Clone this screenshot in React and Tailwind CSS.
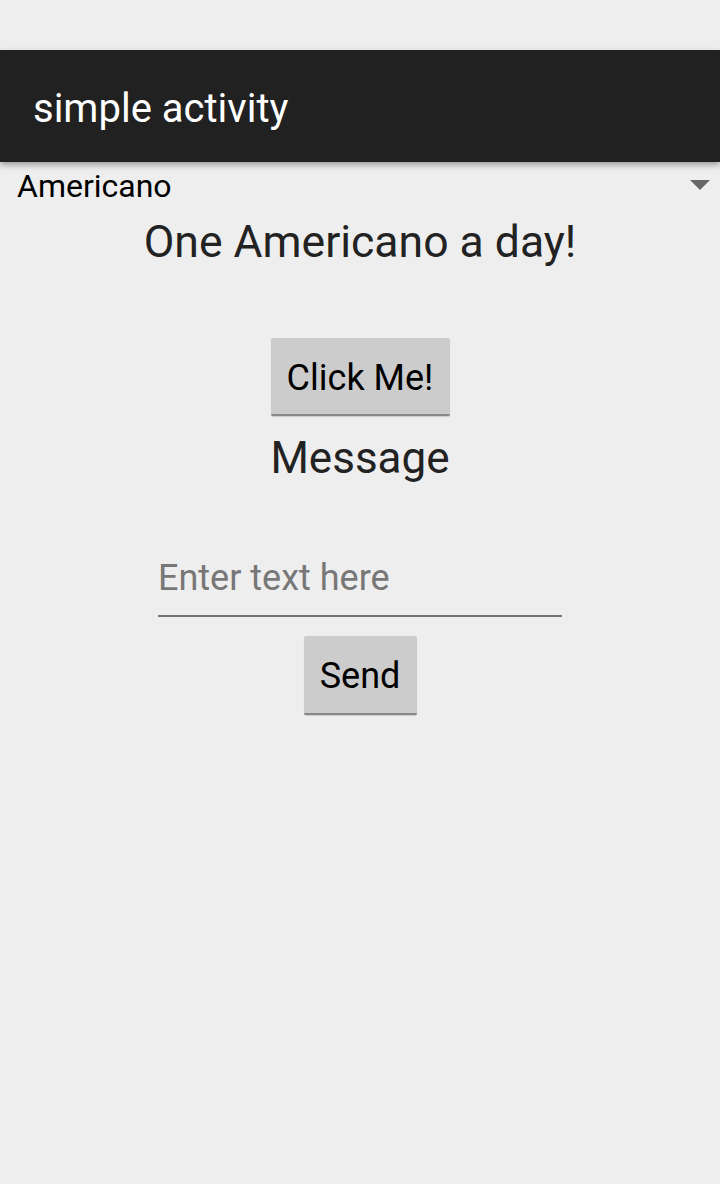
export default function App() {
  return (
    <div className="w-[720px] h-[1184px] bg-[#eeeeee] flex flex-col" style={{ fontFamily: "Roboto, sans-serif" }}>
      <div className="h-[50px] shrink-0" />
      <div className="h-[112px] shrink-0 bg-[#212121] flex items-center pl-[33px] pt-[5px] shadow-[0_3px_6px_rgba(0,0,0,0.35)] relative z-10">
        <span className="text-white text-[40px] leading-none">simple activity</span>
      </div>
      <div className="h-[48px] flex items-center justify-between pl-[17px] pr-[10px]">
        <span className="text-black text-[32px] leading-none">Americano</span>
        <svg width="20" height="12" viewBox="0 0 20 12"><polygon points="0,0 20,0 10,10" fill="#666666" /></svg>
      </div>
      <div className="flex flex-col items-center">
        <div className="text-[#222222] text-[44.5px] leading-[44px] mt-[10px]">One Americano a day!</div>
        <button className="mt-[74px] w-[179px] h-[78px] pt-[4px] bg-[#cccccc] border-b-2 border-[#888888] rounded-[2px] text-black text-[36px] leading-none shadow-[0_1px_1px_rgba(0,0,0,0.15)]">Click Me!</button>
        <div className="mt-[20px] text-[#222222] text-[44px] leading-[44px]">Message</div>
        <div className="mt-[80px] w-[404px] border-b-2 border-[#737373] pb-[19px]">
          <div className="text-[#777777] text-[36px] leading-[36px]">Enter text here</div>
        </div>
        <button className="mt-[19px] w-[113px] h-[79px] pt-[3px] bg-[#cccccc] border-b-2 border-[#888888] rounded-[2px] text-black text-[36px] leading-none shadow-[0_1px_1px_rgba(0,0,0,0.15)]">Send</button>
      </div>
    </div>
  );
}
